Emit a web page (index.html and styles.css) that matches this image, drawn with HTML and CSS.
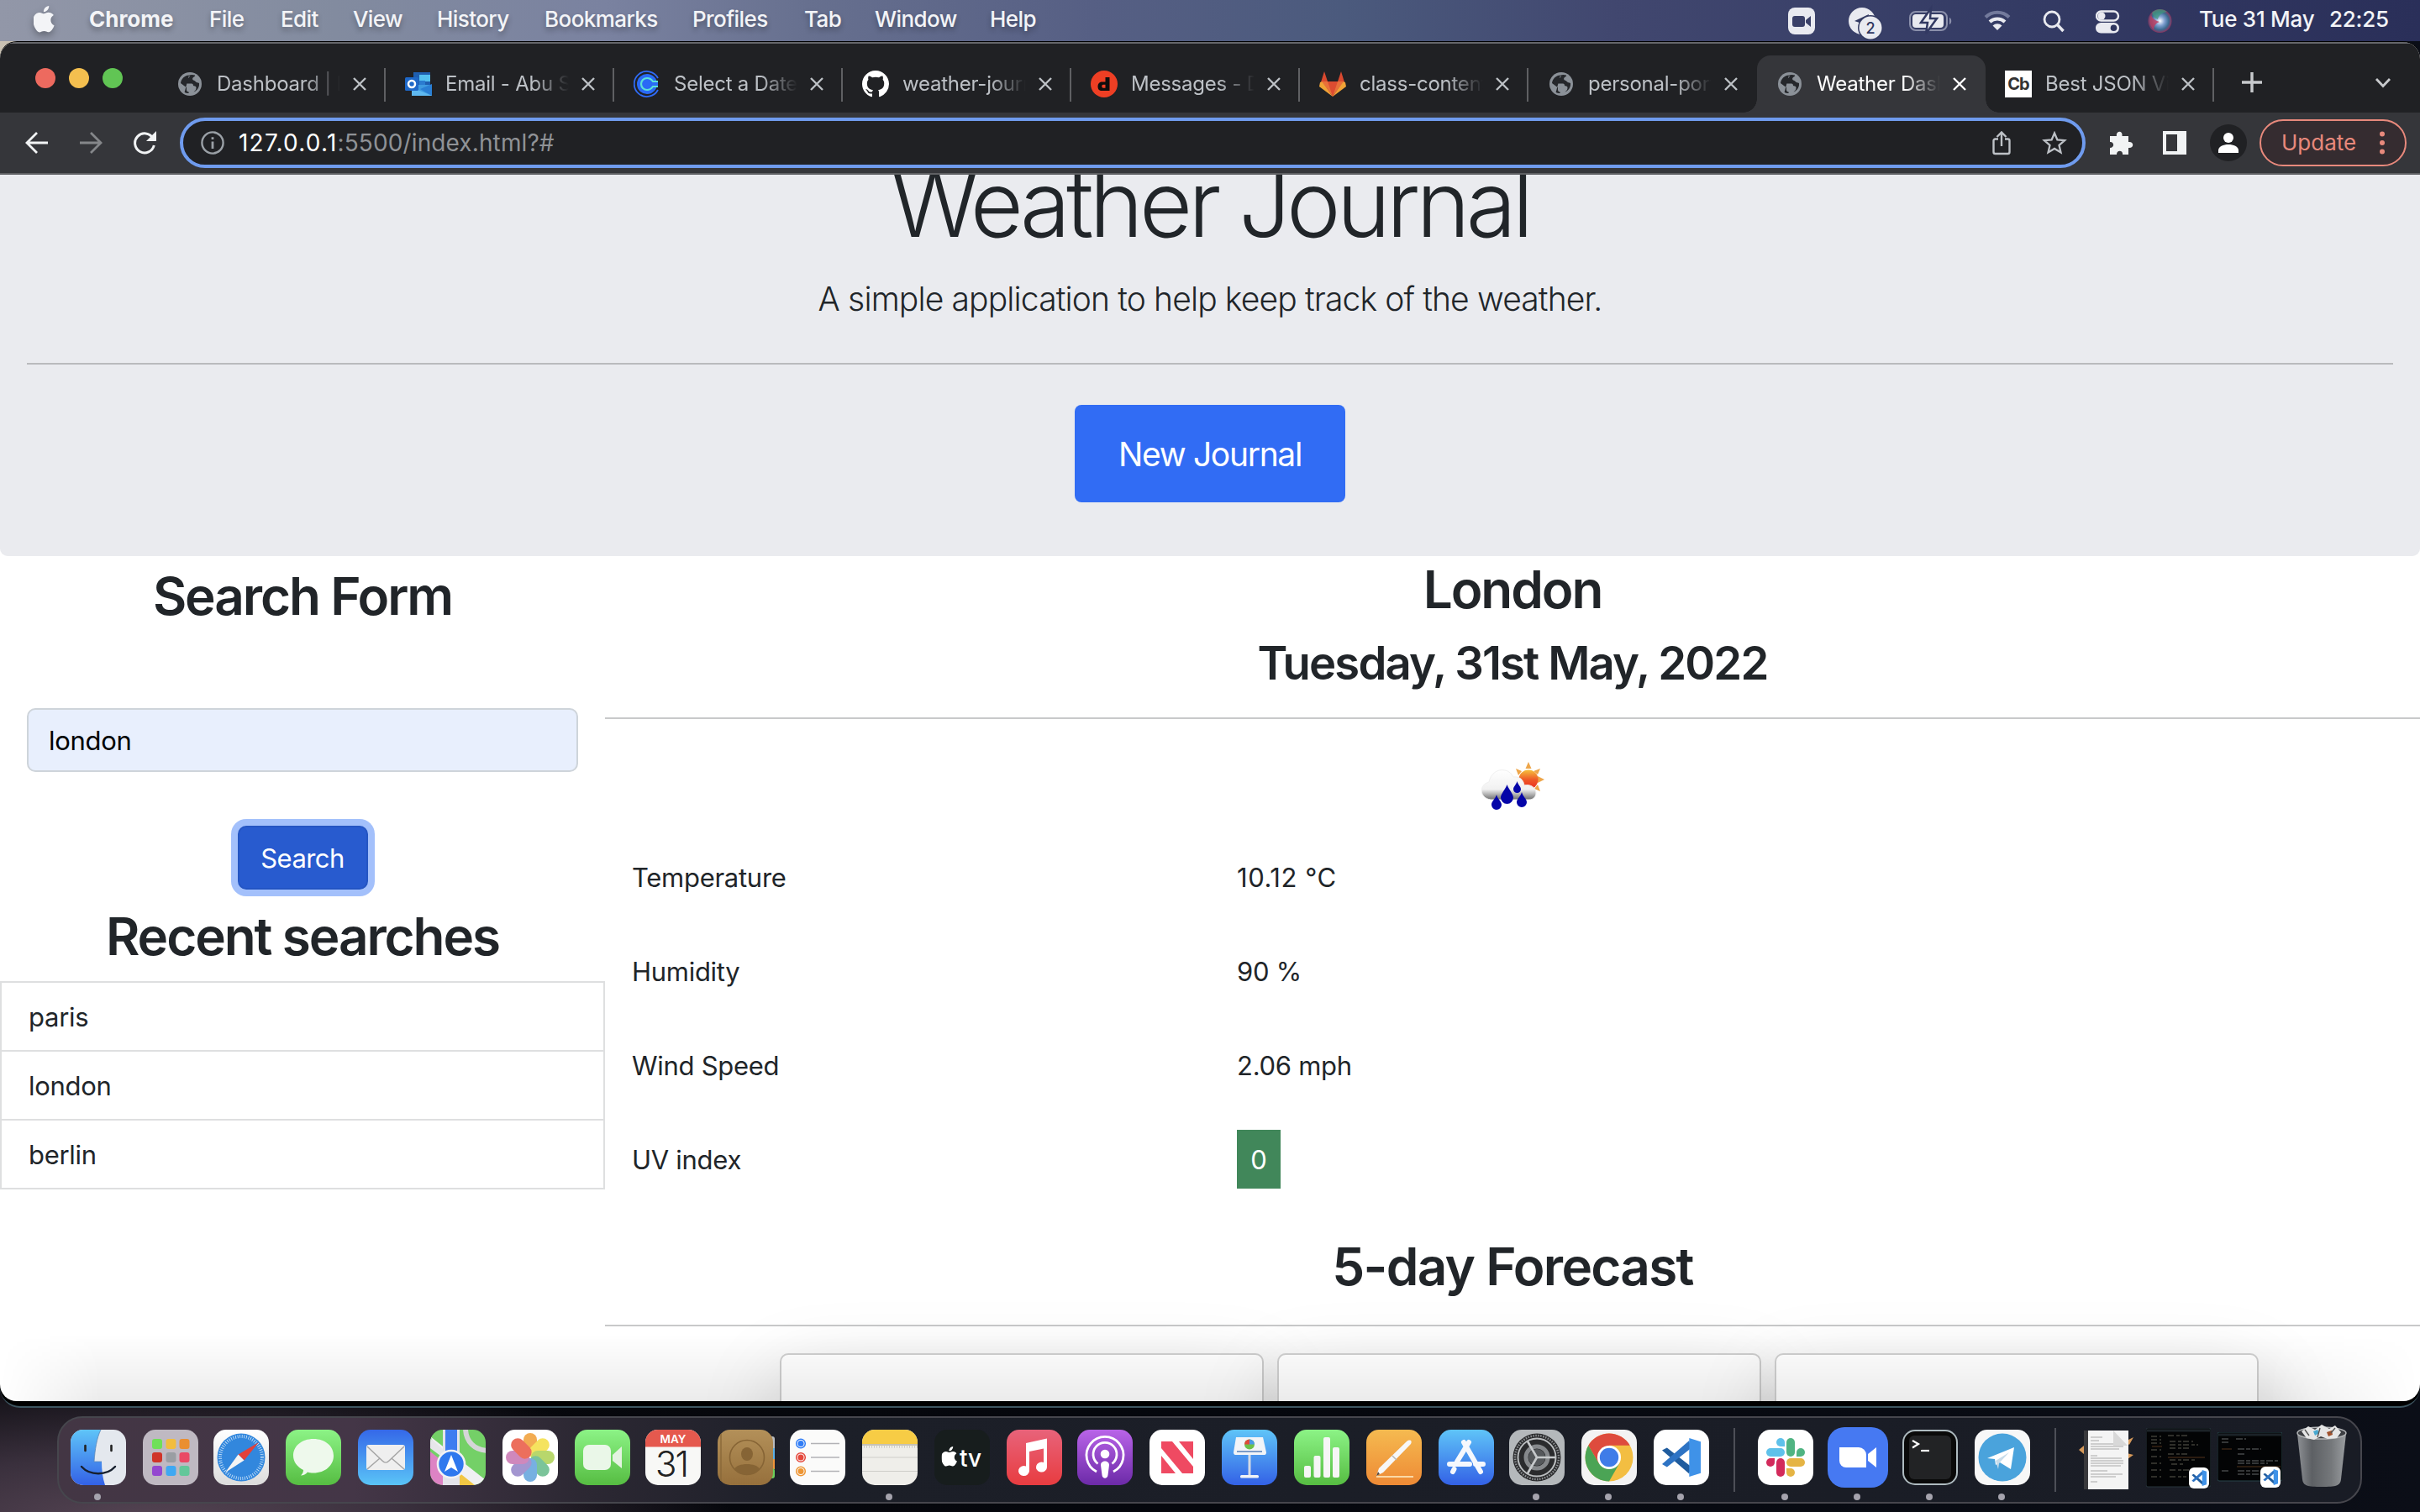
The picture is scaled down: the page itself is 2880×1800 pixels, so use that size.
FILE: index.html
```html
<!DOCTYPE html>
<html lang="en">
<head>
<meta charset="utf-8">
<title>Weather Dashboard</title>
<link rel="stylesheet" href="styles.css">
</head>
<body>
<svg class="defs" width="0" height="0" aria-hidden="true">
  <defs>
    <symbol id="close" viewBox="0 0 16 16"><path d="M1 1L15 15M15 1L1 15" stroke="currentColor" stroke-width="2.4" fill="none"/></symbol>
    <symbol id="globe" viewBox="0 0 28 28"><circle cx="14" cy="14" r="14" fill="#8b9198"/><path d="M13 3.5C8 3.8 3.6 7.600 3 13l7 5.200v2.600c0 1.500 1 2.600 2.600 2.800V25c-1.500.2-3.500-.2-5-1M13 3.500c1 1.500.6 2.700-.8 3.600-1.300.9-1 2-1 3.400H8v3h8c1.500 0 2 1 2 2.500 3 .3 4 1.400 3.400 3.600-.4 1.600-1.400 2.800-2.900 4 4.600-2 7-6 6.500-10.600-1.700-1-3.500-.5-4.400-2-.9-1.600-2.500-.8-3.300-2.300-.6-1.500.4-2.600 1.800-3.400 1.400-.7 1.300-1.300.7-1.800A12 12 0 0 0 13 3.500z" fill="#25272b"/></symbol>
    <symbol id="apple" viewBox="0 0 26 32"><path d="M18.200 0c.2 1.900-.6 3.700-1.700 5-1.100 1.300-2.900 2.300-4.600 2.200-.2-1.800.7-3.700 1.700-4.900C14.800 1 16.700.1 18.200 0zM23.900 11c-.2.100-3.600 2.100-3.500 6 0 4.700 4.200 6.300 4.200 6.300s-.6 2.100-2.100 4.200c-1.300 1.900-2.700 3.800-4.800 3.800-2.100.1-2.800-1.200-5.200-1.200-2.400 0-3.200 1.200-5.200 1.300-2.100.1-3.600-2-4.900-3.900C-.2 23.600-2 16.400.8 11.700 2.100 9.400 4.500 7.900 7.100 7.900c2 0 3.900 1.400 5.200 1.400 1.200 0 3.500-1.700 6-1.400 1 0 3.900.4 5.600 3.100z" fill="currentColor"/></symbol>
    <symbol id="vscode" viewBox="0 0 48 64" preserveAspectRatio="none"><path d="M1 20l6-4 29 31-2 12z" fill="#1f5c9e"/><path d="M1 43l6 5L36 17 34 4z" fill="#2d73c4"/><path d="M34 0l14 6v52l-14 6z" fill="#3f92e8"/></symbol>
    <linearGradient id="g-green" x2="0" y2="1"><stop stop-color="#8cf386"/><stop offset="1" stop-color="#56bd42"/></linearGradient>
    <linearGradient id="g-blue" x2="0" y2="1"><stop stop-color="#3568e8"/><stop offset="1" stop-color="#5ac4f7"/></linearGradient>
    <linearGradient id="g-sky" x2="0" y2="1"><stop stop-color="#5fc4f8"/><stop offset="1" stop-color="#3361e6"/></linearGradient>
    <linearGradient id="g-white" x2="0" y2="1"><stop stop-color="#fff"/><stop offset="1" stop-color="#dcdcdc"/></linearGradient>
    <linearGradient id="g-orange" x2="0" y2="1"><stop stop-color="#f5ba50"/><stop offset="1" stop-color="#ee8a35"/></linearGradient>
    <linearGradient id="g-purple" x2="0" y2="1"><stop stop-color="#b964e8"/><stop offset="1" stop-color="#6c2aa8"/></linearGradient>
    <linearGradient id="g-red" x2="0" y2="1"><stop stop-color="#e8637a"/><stop offset="1" stop-color="#e83c40"/></linearGradient>
    <linearGradient id="g-brown" x2="0" y2="1"><stop stop-color="#b39059"/><stop offset="1" stop-color="#96703c"/></linearGradient>
    <linearGradient id="g-trash" x2="1" y2="0"><stop stop-color="#8d9094"/><stop offset=".3" stop-color="#5d6064"/><stop offset=".7" stop-color="#75787b"/><stop offset="1" stop-color="#9a9da0"/></linearGradient>
    <linearGradient id="g-cloud" x2="0" y2="1"><stop stop-color="#fff"/><stop offset=".65" stop-color="#f1f1f1"/><stop offset="1" stop-color="#6e6e6e"/></linearGradient>
    <linearGradient id="g-sun" x2="0" y2="1"><stop stop-color="#f6c13c"/><stop offset=".5" stop-color="#ef5a28"/><stop offset="1" stop-color="#ea2c20"/></linearGradient>
    <radialGradient id="g-siri"><stop stop-color="#fff"/><stop offset=".4" stop-color="#7f9fd0"/><stop offset=".75" stop-color="#3b6a90"/><stop offset="1" stop-color="#8a3560"/></radialGradient>
  </defs>
</svg>

<div class="desktop">
  <header class="menubar">
    <svg class="menubar-apple" width="26" height="32"><use href="#apple"/></svg>
    <nav class="menus">
      <span class="menu menu-app">Chrome</span><span class="menu">File</span><span class="menu">Edit</span><span class="menu">View</span><span class="menu">History</span><span class="menu">Bookmarks</span><span class="menu">Profiles</span><span class="menu">Tab</span><span class="menu">Window</span><span class="menu">Help</span>
    </nav>
    <div class="status">
      <svg width="72" height="48" viewBox="0 0 72 48"><rect x="0" y="8" width="32" height="32" rx="8" fill="#e9eaf0"/><rect x="5" y="18" width="15" height="13" rx="3" fill="#3a4068"/><path d="M21 23l6-5v13l-6-5z" fill="#3a4068"/></svg>
      <svg width="72" height="48" viewBox="0 0 72 48"><circle cx="16" cy="24" r="16" fill="#e9eaf0"/><path d="M7 24l17-8-3 16-5-4-3 3v-5z" fill="#343b63"/><circle cx="26" cy="32" r="15" fill="#343b63"/><circle cx="26" cy="32" r="13.500" fill="#e9eaf0"/><text x="26" y="38.500" text-anchor="middle" class="badge-text">2</text></svg>
      <svg width="89" height="48" viewBox="0 0 89 48"><rect x="1" y="13" width="44" height="22" rx="7" fill="none" stroke="#8b90ab" stroke-width="2"/><path d="M48 20c3 1 3 7 0 8z" fill="#8b90ab"/><rect x="4" y="16" width="37" height="16" rx="4" fill="#e9eaf0"/><path d="M26 9L14 26h8l-2 13 13-18h-8z" fill="#e9eaf0" stroke="#323962" stroke-width="2.500"/></svg>
      <svg width="70" height="48" viewBox="0 0 70 48"><g fill="none" stroke-width="4"><path d="M2 19.500a20 20 0 0 1 28 0" stroke="#737a9c"/><path d="M7 25a13 13 0 0 1 18 0" stroke="#e9eaf0"/></g><path d="M10.500 29.500a8 8 0 0 1 11 0L16 35z" fill="#e9eaf0"/></svg>
      <svg width="63" height="48" viewBox="0 0 63 48"><circle cx="11" cy="22" r="9" fill="none" stroke="#e9eaf0" stroke-width="2.800"/><path d="M17.500 28.500l7 7.500" stroke="#e9eaf0" stroke-width="3.400"/></svg>
      <svg width="62" height="48" viewBox="0 0 62 48"><rect x="1" y="12.500" width="26" height="11" rx="5.500" fill="none" stroke="#e9eaf0" stroke-width="2.400"/><circle cx="7" cy="18" r="4.500" fill="#e9eaf0"/><rect x="0" y="26" width="28" height="12.500" rx="6.200" fill="#e9eaf0"/><circle cx="21.500" cy="32.200" r="3.800" fill="#2f365f"/></svg>
      <svg width="61" height="48" viewBox="0 0 61 48"><circle cx="14.500" cy="24" r="14" fill="url(#g-siri)"/><path d="M5 14c5-5 13-5 18-1-6 1-10 4-11 9-3-1-6-4-7-8z" fill="#3f9a7c" opacity=".7"/><path d="M4 17c-3 5-2 13 3 17 1-6 4-8 7-9-4-1-8-3-10-8z" fill="#c03a5c" opacity=".8"/></svg>
      <span class="clock-date">Tue 31 May</span><span class="clock-time">22:25</span>
    </div>
  </header>

  <div class="window-stack">
  <main class="window">
    <section class="tabstrip">
      <div class="lights"><i class="light light-red"></i><i class="light light-yellow"></i><i class="light light-green"></i></div>
      <div class="tab"><svg class="favicon" viewBox="-2 -2 32 32"><use href="#globe" width="28" height="28"/></svg><span class="tab-title">Dashboard | Ed</span><svg class="tab-close"><use href="#close"/></svg></div>
      <div class="tab"><svg class="favicon" viewBox="0 0 32 32"><rect x="10" y="2" width="20" height="18" fill="#1f5fb0"/><rect x="17" y="5" width="13" height="8" fill="#54c0f0"/><rect x="17" y="12" width="7" height="8" fill="#2b7cd0"/><path d="M8 17l24 0v13H8z" fill="#3f9be0"/><path d="M32 16v14L18 22z" fill="#2a7fd4"/><path d="M8 20l24 10H8z" fill="#5fb9f0"/><rect x="0" y="8" width="16" height="16" rx="1.500" fill="#1e68c8"/><circle cx="8" cy="16" r="4" fill="none" stroke="#fff" stroke-width="2.500"/></svg><span class="tab-title">Email - Abu Sa</span><svg class="tab-close"><use href="#close"/></svg></div>
      <div class="tab"><svg class="favicon" viewBox="0 0 32 32"><g fill="none"><path d="M29 9A15 15 0 1 0 29 23" stroke="#2f6bf5" stroke-width="1.800"/><circle cx="16" cy="16" r="12" fill="#2a6af5"/><path d="M29 13h-6c-2-3-4-4-7-4a7 7 0 0 0 0 14c3 0 5-1 7-4h6" fill="#2a6af5" stroke="#5ce0d8" stroke-width="2.200"/></g></svg><span class="tab-title">Select a Date &amp;</span><svg class="tab-close"><use href="#close"/></svg></div>
      <div class="tab"><svg class="favicon" viewBox="0 0 16 16"><path fill="#fff" d="M8 0C3.580 0 0 3.580 0 8c0 3.540 2.290 6.530 5.470 7.590.4.070.55-.17.550-.38 0-.19-.01-.82-.01-1.490-2.010.37-2.530-.49-2.690-.94-.09-.23-.48-.94-.82-1.130-.28-.15-.68-.52-.01-.53.63-.01 1.080.58 1.230.82.72 1.210 1.870.87 2.330.66.070-.52.28-.87.51-1.070-1.780-.2-3.640-.89-3.640-3.950 0-.87.310-1.590.82-2.150-.08-.2-.36-1.020.08-2.120 0 0 .67-.21 2.200.82.64-.18 1.320-.27 2-.27s1.360.09 2 .27c1.530-1.040 2.200-.82 2.200-.82.44 1.100.16 1.920.08 2.120.51.560.82 1.270.82 2.150 0 3.070-1.870 3.750-3.650 3.950.29.25.54.73.54 1.480 0 1.070-.01 1.930-.01 2.200 0 .21.150.46.55.38A8.010 8.010 0 0 0 16 8c0-4.420-3.580-8-8-8z"/></svg><span class="tab-title">weather-journal</span><svg class="tab-close"><use href="#close"/></svg></div>
      <div class="tab"><svg class="favicon" viewBox="0 0 32 32"><circle cx="16" cy="16" r="16" fill="#ee3f24"/><path d="M17.500 8h5v16H13.500c-3.500 0-5-2-5-5s1.500-5.500 5-5.500h4zM17.500 16.800h-2.600c-1 0-1.600.8-1.600 2s.6 2 1.600 2h2.600z" fill="#0d0d0d" fill-rule="evenodd"/></svg><span class="tab-title">Messages - Dev</span><svg class="tab-close"><use href="#close"/></svg></div>
      <div class="tab"><svg class="favicon" viewBox="0 0 32 32"><path d="M6 1L1 17h30L26 1l-4 12H10z" fill="#d9492f"/><path d="M1 14l-1 5 16 12 16-12-1-5-3-1-12 18L4 13z" fill="#f0a336"/><path d="M3 13h26L16 31z" fill="#e8703a"/><path d="M10 13h12l-6 18z" fill="#dc4c31"/></svg><span class="tab-title">class-content/</span><svg class="tab-close"><use href="#close"/></svg></div>
      <div class="tab tab-before-active"><svg class="favicon" viewBox="-2 -2 32 32"><use href="#globe" width="28" height="28"/></svg><span class="tab-title">personal-portfo</span><svg class="tab-close"><use href="#close"/></svg></div>
      <div class="tab tab-active"><svg class="favicon" viewBox="-2 -2 32 32"><use href="#globe" width="28" height="28"/></svg><span class="tab-title">Weather Dash</span><svg class="tab-close"><use href="#close"/></svg></div>
      <div class="tab"><span class="favicon favicon-cb">Cb</span><span class="tab-title">Best JSON View</span><svg class="tab-close"><use href="#close"/></svg></div>
      <svg class="tab-new" width="24" height="24" viewBox="0 0 24 24"><path d="M12 0v24M0 12h24" stroke="#c8cacd" stroke-width="3.400"/></svg>
      <svg class="tab-menu" width="20" height="14" viewBox="0 0 20 14"><path d="M2 2l8 8.500L18 2" stroke="#c8cacd" stroke-width="2.800" fill="none"/></svg>
    </section>

    <section class="toolbar">
      <svg class="nav-icon" viewBox="0 0 28 28"><path d="M27 14H3M14 2L2 14l12 12" stroke="#f1f3f4" stroke-width="2.800" fill="none"/></svg>
      <svg class="nav-icon nav-forward" viewBox="0 0 28 28"><path d="M1 14h24M14 2l12 12-12 12" stroke="#85878a" stroke-width="2.800" fill="none"/></svg>
      <svg class="nav-icon nav-reload" viewBox="0 0 28 28"><path d="M24 8.500A11.500 11.500 0 1 0 25.300 17" stroke="#f1f3f4" stroke-width="3" fill="none"/><path d="M28 0v12H16z" fill="#f1f3f4"/></svg>
      <div class="omnibox">
        <svg width="28" height="28" viewBox="0 0 28 28"><circle cx="14" cy="14" r="12.600" fill="none" stroke="#9aa0a6" stroke-width="2.400"/><path d="M14 12.500V21M14 7.200v2.800" stroke="#9aa0a6" stroke-width="2.800"/></svg>
        <span class="url"><b>127.0.0.1</b>:5500/index.html?#</span>
        <svg class="omni-share" width="22" height="30" viewBox="0 0 22 30"><path d="M7 10.500H3.500A2 2 0 0 0 1.500 12.500V26a2 2 0 0 0 2 2h15a2 2 0 0 0 2-2V12.500a2 2 0 0 0-2-2H15M11 19V3M5.500 8L11 2.500 16.500 8" stroke="#bdc1c6" stroke-width="2.400" fill="none"/></svg>
        <svg width="30" height="28" viewBox="0 0 30 28"><path d="M15 2.500l3.400 8 8.700.7-6.600 5.700 2 8.500L15 20.900l-7.500 4.500 2-8.500L2.900 11.200l8.700-.7z" stroke="#bdc1c6" stroke-width="2.300" fill="none"/></svg>
      </div>
      <svg class="ext" width="30" height="28" viewBox="0 0 30 28"><path d="M1 6h8c-1.500-6 7.500-8 6.500 0H23v7c7-1 7 8 0 7v8h-7c1-5-7-6-7 0H1v-8c6 0 5-7.500 0-7z" fill="#f1f3f4"/></svg>
      <svg class="panel" width="28" height="28" viewBox="0 0 28 28"><path d="M0 0h28v28H0zM4 4v20h13V4z" fill="#f1f3f4" fill-rule="evenodd"/></svg>
      <svg class="avatar" width="44" height="44" viewBox="0 0 44 44"><circle cx="22" cy="22" r="22" fill="#202124"/><circle cx="22" cy="16" r="6" fill="#fff"/><path d="M10 34v-3c0-4.500 6-7 12-7s12 2.500 12 7v3z" fill="#fff"/></svg>
      <div class="update"><span>Update</span><svg width="6" height="28" viewBox="0 0 6 28"><g fill="#e8897c"><circle cx="3" cy="3.500" r="3"/><circle cx="3" cy="14" r="3"/><circle cx="3" cy="24.500" r="3"/></g></svg></div>
    </section>

    <div class="page">
      <section class="jumbotron">
        <h1>Weather Journal</h1>
        <p class="lead">A simple application to help keep track of the weather.</p>
        <hr>
        <button class="btn btn-new">New Journal</button>
      </section>
      <div class="columns">
        <aside class="sidebar">
          <h2 class="search-title">Search Form</h2>
          <div class="field">london</div>
          <button class="btn btn-search">Search</button>
          <h2 class="recent-title">Recent searches</h2>
          <ul class="recent"><li>paris</li><li>london</li><li>berlin</li></ul>
        </aside>
        <section class="weather">
          <h2 class="city">London</h2>
          <h3>Tuesday, 31st May, 2022</h3>
          <hr>
          <svg class="condition" width="100" height="100" viewBox="0 0 100 100"><g fill="#eea64a"><path d="M69 19l3.500 8h-7zM83 27l-3 7-5-4zM88 40l-8 4v-8zM83 54l-7-3 4-5zM54 27l7 3-4 5z"/></g><circle cx="69" cy="40" r="11.500" fill="url(#g-sun)"/><path d="M24 64c-14-2-14-18-2-21 2-10 10-16 19-14 5 1 8 4 10 8 7-1 12 3 13 10 6-2 14 2 14 9 0 5-4 8-8 8z" fill="url(#g-cloud)" stroke="#f0f0f0"/><g fill="#0505a8"><path d="M43.500 46c2 6 7.500 11 7.500 15.500a7.500 7.500 0 0 1-15 0C36 57 41.500 52 43.500 46z"/><path d="M55.500 42c1 4 4.500 6.500 4.500 9.500a4.500 4.500 0 0 1-9 0c0-3 3.500-5.500 4.500-9.500z"/><path d="M61 55c1.200 5 6 8 6 12a6 6 0 0 1-12 0c0-4 4.800-7 6-12z"/><path d="M31 58c1.200 5 6 8 6 12a6 6 0 0 1-12 0c0-4 4.800-7 6-12z"/></g></svg>
          <dl class="readings">
            <dt>Temperature</dt><dd class="temp">10.12 °C</dd>
            <dt>Humidity</dt><dd>90 %</dd>
            <dt>Wind Speed</dt><dd>2.06 mph</dd>
            <dt>UV index</dt><dd><span class="uv">0</span></dd>
          </dl>
          <h2 class="forecast-title">5-day Forecast</h2>
          <hr>
          <div class="cards"><div class="card"></div><div class="card"></div><div class="card"></div></div>
        </section>
      </div>
      <div class="page-shade"></div>
    </div>
  </main>
  </div>

  <footer class="dock">
    <div class="app running"><svg class="icon finder" viewBox="0 0 66 66"><rect width="66" height="66" rx="15" fill="#e4e8ee"/><path d="M15 0h21c-5 10-7 24-8 38h9c0 10 1 19 4 28H15A15 15 0 0 1 0 51V15A15 15 0 0 1 15 0z" fill="url(#g-sky)"/><path d="M36 0c-5 10-7 24-8 38h9" fill="none" stroke="#5a88b8" stroke-width=".8"/><path d="M17.500 19v6M48.500 19v6" stroke="#222" stroke-width="2.600" stroke-linecap="round"/><path d="M13 44c10 11 30 11 40 0" fill="none" stroke="#17202e" stroke-width="2.400" stroke-linecap="round"/></svg></div>
    <div class="app"><svg class="icon" viewBox="0 0 66 66"><rect width="66" height="66" rx="15" fill="#bfb9c2"/><g><rect x="11" y="11" width="12" height="12" rx="3" fill="#6fe058"/><rect x="27.500" y="11" width="12" height="12" rx="3" fill="#f2bd3e"/><rect x="43.500" y="11" width="12" height="12" rx="3" fill="#ea8f30"/><rect x="11" y="27" width="12" height="12" rx="3" fill="#d03428"/><rect x="27.500" y="27" width="12" height="12" rx="3" fill="#9a9ea3"/><rect x="43.500" y="27" width="12" height="12" rx="3" fill="#ea4a64"/><rect x="11" y="43" width="12" height="12" rx="3" fill="#9448d0"/><rect x="27.500" y="43" width="12" height="12" rx="3" fill="#3fa8f2"/><rect x="43.500" y="43" width="12" height="12" rx="3" fill="#63c79a"/></g></svg></div>
    <div class="app nudge"><svg class="icon" viewBox="0 0 66 66"><rect width="66" height="66" rx="15" fill="url(#g-white)"/><circle cx="33" cy="33" r="28.500" fill="#3287dd"/><circle cx="33" cy="33" r="25" fill="none" stroke="#cfe6fa" stroke-width="4" stroke-dasharray=".8 1.820"/><path d="M54 15L36.500 36.500 29.500 29.500z" fill="#e2413a"/><path d="M14 51l15.500-21.500 7 7z" fill="#f4f4f4"/></svg></div>
    <div class="app"><svg class="icon" viewBox="0 0 66 66"><rect width="66" height="66" rx="15" fill="url(#g-green)"/><path d="M33 11c14 0 24 8.500 24 20S47 51.500 33 51.500c-3 0-5-.3-7-1-2 2.500-5 4-8 4 2-2 3-4 3-6.500C13.500 44 9 38 9 31c0-11.500 10-20 24-20z" fill="#eef9ec"/></svg></div>
    <div class="app"><svg class="icon" viewBox="0 0 66 66"><rect width="66" height="66" rx="15" fill="url(#g-blue)"/><rect x="10" y="18" width="46" height="30" rx="3" fill="#efefef"/><path d="M11 20l18 17c3 3 5 3 8 0l18-17M11 47l15-13M55 47L40 34" stroke="#a5a5a5" stroke-width="1.500" fill="none"/></svg></div>
    <div class="app"><svg class="icon" viewBox="0 0 66 66"><clipPath id="maps-clip"><rect width="66" height="66" rx="15"/></clipPath><g clip-path="url(#maps-clip)"><rect width="66" height="66" fill="#74d067"/><path d="M0 26l20 16v24H0z" fill="#dd83c4"/><path d="M0 8l66 52v6H32z" fill="#f0f0f2"/><path d="M0 10l16 14v10L0 22z" fill="#e6e6ea"/><path d="M33 66V50l20 16z" fill="#f2c744"/><rect x="15" y="0" width="20" height="66" fill="#e4e4ea"/><rect x="18" y="0" width="14" height="34" fill="#3d7cf0"/><path d="M42 0c1 14 10 24 26 25" fill="none" stroke="#d5d5d8" stroke-width="6"/></g><circle cx="25" cy="41" r="16" fill="#2f78ee" stroke="#f1f1f4" stroke-width="2.600"/><path d="M25 30l8 20-8-5-8 5z" fill="#fff"/></svg></div>
    <div class="app"><svg class="icon" viewBox="0 0 66 66"><rect width="66" height="66" rx="15" fill="#fff"/><g opacity=".82"><rect x="25" y="4" width="16" height="28" rx="8" fill="#f09a2e"/><rect x="25" y="4" width="16" height="28" rx="8" fill="#f3dd3c" transform="rotate(45 33 33)"/><rect x="25" y="4" width="16" height="28" rx="8" fill="#a9cf4c" transform="rotate(90 33 33)"/><rect x="25" y="4" width="16" height="28" rx="8" fill="#5fb884" transform="rotate(135 33 33)"/><rect x="25" y="4" width="16" height="28" rx="8" fill="#5a9fdb" transform="rotate(180 33 33)"/><rect x="25" y="4" width="16" height="28" rx="8" fill="#8f7fc6" transform="rotate(225 33 33)"/><rect x="25" y="4" width="16" height="28" rx="8" fill="#c56fae" transform="rotate(270 33 33)"/><rect x="25" y="4" width="16" height="28" rx="8" fill="#e8503a" transform="rotate(315 33 33)"/></g></svg></div>
    <div class="app"><svg class="icon" viewBox="0 0 66 66"><rect width="66" height="66" rx="15" fill="url(#g-green)"/><rect x="10" y="18" width="33" height="30" rx="7" fill="#eaf7e8"/><path d="M45 30l11-10v26L45 37z" fill="#e4f3e1"/></svg></div>
    <div class="app nudge"><svg class="icon" viewBox="0 0 66 66"><clipPath id="cal-clip"><rect width="66" height="66" rx="15"/></clipPath><g clip-path="url(#cal-clip)"><rect width="66" height="66" fill="#f8f8f6"/><rect width="66" height="20.500" fill="#e5594e"/></g><text x="33" y="16" text-anchor="middle" class="cal-month">MAY</text><text x="31" y="56" text-anchor="middle" class="cal-day">31</text></svg></div>
    <div class="app"><svg class="icon" viewBox="0 0 66 66"><rect x="58" y="8" width="10" height="18" rx="3" fill="#b9bcc0"/><rect x="58" y="22" width="10" height="14" fill="#5ab0e8"/><rect x="58" y="35" width="10" height="12" fill="#f0953a"/><rect x="58" y="46" width="10" height="12" rx="3" fill="#6cd05a"/><rect width="66" height="66" rx="15" fill="url(#g-brown)"/><path d="M4 5v56" stroke="#8b6a3a" stroke-width="1.500"/><circle cx="35" cy="33" r="20.500" fill="none" stroke="#866435" stroke-width="1.600"/><ellipse cx="35" cy="29" rx="7" ry="8" fill="#866435"/><path d="M20 47c3-8 27-8 30 0-7 9-23 9-30 0z" fill="#866435"/></svg></div>
    <div class="app"><svg class="icon" viewBox="0 0 66 66"><rect width="66" height="66" rx="15" fill="#fbfbfa"/><g stroke="#b2b2b6" stroke-width="1.500"><path d="M25 16.500h34M25 33h34M25 49.500h34"/></g><g stroke-width="1.500" fill="none"><circle cx="13" cy="16.500" r="5.300" stroke="#2f7cf6"/><circle cx="13" cy="33" r="5.300" stroke="#e5483c"/><circle cx="13" cy="49.500" r="5.300" stroke="#ee9634"/></g><circle cx="13" cy="16.500" r="3.500" fill="#2f7cf6"/><circle cx="13" cy="33" r="3.500" fill="#e5483c"/><circle cx="13" cy="49.500" r="3.500" fill="#ee9634"/></svg></div>
    <div class="app running"><svg class="icon" viewBox="0 0 66 66"><clipPath id="note-clip"><rect width="66" height="66" rx="15"/></clipPath><g clip-path="url(#note-clip)"><rect width="66" height="66" fill="#efeeea"/><rect width="66" height="17" fill="#f7cc45"/><path d="M0 18h66" stroke="#b9b3a4" stroke-width="1.500"/><path d="M2 20.500h64" stroke="#c4c2bd" stroke-width="2" stroke-dasharray="1 2"/><path d="M0 33h66M0 49.500h66" stroke="#cfceca" stroke-width="1.200"/></g></svg></div>
    <div class="app"><svg class="icon" viewBox="0 0 66 66"><rect width="66" height="66" rx="15" fill="#171d1d"/><svg x="8.500" y="20" width="19.500" height="24" class="tv-apple"><use href="#apple"/></svg><text x="30" y="43.500" class="tv-text" textLength="26">tv</text></svg></div>
    <div class="app"><svg class="icon" viewBox="0 0 66 66"><rect width="66" height="66" rx="15" fill="url(#g-red)"/><path d="M23 16l25-5.500v34a6.500 6 0 1 1-4-5.500V22.500L27 26v23a6.500 6 0 1 1-4-5.500z" fill="#fff"/></svg></div>
    <div class="app nudge"><svg class="icon" viewBox="0 0 66 66"><rect width="66" height="66" rx="15" fill="url(#g-purple)"/><g fill="none" stroke="#fff" stroke-width="2.800"><path d="M23 50a22 22 0 1 1 20 0"/><path d="M24.500 40.500a14 14 0 1 1 17 0"/></g><circle cx="33" cy="29" r="5.300" fill="#fff"/><path d="M28 42c0-6 10-6 10 0l-1.500 12c-.5 5-6.500 5-7 0z" fill="#fff"/></svg></div>
    <div class="app"><svg class="icon" viewBox="0 0 66 66"><rect width="66" height="66" rx="15" fill="#fff"/><path d="M14 14h13l25 30v8H39L14 22z" fill="#ef4a62"/><path d="M35 14h17v21zM14 31l17 21H14z" fill="#ef4a62"/></svg></div>
    <div class="app"><svg class="icon" viewBox="0 0 66 66"><rect width="66" height="66" rx="15" fill="url(#g-sky)"/><path d="M17 9h32l4 18c0 2-1 3-2 3H16c-1 0-2-1-2-3z" fill="#f2f4f8"/><path d="M18 26h30" stroke="#7d9cc8" stroke-width="2"/><circle cx="33" cy="17.500" r="6" fill="#6cc04a"/><path d="M33 17.500v-6a6 6 0 0 0-6 6z" fill="#e04a3a"/><path d="M33 17.500v-6a6 6 0 0 1 6 6z" fill="#4a9ae8"/><path d="M33 30v25" stroke="#d5dae4" stroke-width="3"/><rect x="22" y="54" width="22" height="3.500" rx="1.500" fill="#f0f2f6"/></svg></div>
    <div class="app"><svg class="icon" viewBox="0 0 66 66"><rect width="66" height="66" rx="15" fill="url(#g-green)"/><g fill="#f6f6f6"><rect x="12" y="43" width="8" height="14" rx="2"/><rect x="23.500" y="31" width="8" height="26" rx="2"/><rect x="35" y="9" width="8" height="48" rx="2"/><rect x="46" y="21" width="8" height="36" rx="2"/></g></svg></div>
    <div class="app"><svg class="icon" viewBox="0 0 66 66"><rect width="66" height="66" rx="15" fill="url(#g-orange)"/><path d="M12 56h44" stroke="#fbd9a6" stroke-width="2.200"/><path d="M12 55l3-9 33-32c4-3 7-1 5 3L20 51z" fill="#f7f7f7"/><path d="M12 55l2-5 2 3z" fill="#5a4a3a"/><path d="M31 31l5 5" stroke="#b5b5b5" stroke-width="1.500"/></svg></div>
    <div class="app"><svg class="icon" viewBox="0 0 66 66"><rect width="66" height="66" rx="15" fill="url(#g-sky)"/><g stroke="#f5f8fd" stroke-width="6" stroke-linecap="round"><path d="M36 15L22 38M30 15l20 35M18.500 47l-1.500 3M13 41h24M44 41h9"/></g></svg></div>
    <div class="app running nudge"><svg class="icon" viewBox="0 0 66 66"><rect width="66" height="66" rx="15" fill="#b4b8bb"/><circle cx="33" cy="33" r="28.500" fill="#2a2b2d"/><circle cx="33" cy="33" r="26" fill="none" stroke="#8d9093" stroke-width="2.500" stroke-dasharray="1.500 1.500"/><circle cx="33" cy="33" r="22.500" fill="none" stroke="#b9bcbe" stroke-width="2"/><circle cx="33" cy="33" r="13" fill="none" stroke="#85888b" stroke-width="5"/><circle cx="33" cy="33" r="10" fill="#55585b"/><path d="M33 33h22M33 33L22 14M33 33L22 52" stroke="#c6c9cb" stroke-width="2.600"/></svg></div>
    <div class="app running"><svg class="icon" viewBox="0 0 66 66"><rect width="66" height="66" rx="15" fill="#f3f3f3"/><circle cx="33" cy="33" r="28.500" fill="#f3be42"/><path d="M8.300 18.800A28.500 28.500 0 0 1 57.700 18.800H33L20.700 40z" fill="#de4b3d"/><path d="M8.300 18.800A28.500 28.500 0 0 0 33 61.500L45.300 40H20.700z" fill="#4ba455"/><circle cx="33" cy="33" r="14" fill="#fff"/><circle cx="33" cy="33" r="11.200" fill="#3f7ce8"/></svg></div>
    <div class="app running"><svg class="icon" viewBox="0 0 66 66"><rect width="66" height="66" rx="15" fill="#fff"/><use href="#vscode" x="9" y="10" width="47" height="46"/></svg></div>
    <i class="divider"></i>
    <div class="app running"><svg class="icon" viewBox="0 0 66 66"><rect width="66" height="66" rx="15" fill="#fff"/><g fill="#5fc1ea"><rect x="10" y="22" width="22" height="10" rx="5"/><path d="M32 20h-5a5 5 0 1 1 5-5z"/></g><g fill="#50b482"><rect x="34" y="10" width="10" height="22" rx="5"/><path d="M46 32v-5a5 5 0 1 1 5 5z"/></g><g fill="#e5b444"><rect x="34" y="34" width="22" height="10" rx="5"/><path d="M34 46h5a5 5 0 1 1-5 5z"/></g><g fill="#d32a5b"><rect x="22" y="34" width="10" height="22" rx="5"/><path d="M20 34v5a5 5 0 1 1-5-5z"/></g></svg></div>
    <div class="app running"><svg class="icon icon-zoom" viewBox="0 0 72 72"><rect width="72" height="72" rx="20" fill="#4679f2"/><path d="M14 24h23a9 9 0 0 1 9 9v15H22a8 8 0 0 1-8-8z" fill="#fff"/><path d="M48 32l10-8v24l-10-8z" fill="#fff"/></svg></div>
    <div class="app running"><svg class="icon" viewBox="0 0 66 66"><rect width="66" height="66" rx="15" fill="#aebbc0"/><rect x="2" y="2" width="62" height="62" rx="13" fill="#0a0a0a"/><rect x="8" y="7" width="50" height="52" rx="6" fill="#222325"/><path d="M12 13l7 4-7 4.500" stroke="#fff" stroke-width="2.200" fill="none"/><path d="M22 25h10" stroke="#fff" stroke-width="2.200"/></svg></div>
    <div class="app running"><svg class="icon" viewBox="0 0 66 66"><rect width="66" height="66" rx="15" fill="#f7f7f7"/><circle cx="33" cy="33" r="28.500" fill="#4aa3dc"/><path d="M15 34l32-13-4 26-13-8-5 3-1-7z" fill="#fff"/><path d="M25 37l16-10-12 13-1 7z" fill="#c8dcea"/></svg></div>
    <i class="divider"></i>
    <svg class="doc" width="66" height="72" viewBox="0 0 66 72"><path d="M0 24l6-5v10zM55 14l10-5-5 9zM57 28l8 2-7 5z" fill="#d79a5a"/><rect x="6" y="1" width="7" height="70" fill="#39393c"/><rect x="11" y="1" width="48" height="70" fill="#f4f4f4"/><g stroke="#a8a8a8" stroke-width="1"><path d="M14 9h14M14 13h10M14 17h39M14 20h39M14 23h34M14 31h8M14 34h37M14 37h39M14 40h39M14 43h36M14 49h20M14 53h38M14 56h30M14 62h8"/></g><path d="M41 1l17 18H41z" fill="#d8d8d8"/></svg>
    <svg class="mini mini-a" width="77" height="72" viewBox="0 0 77 72"><rect width="77" height="70" rx="2" fill="#030405" stroke="#29353d"/><path d="M1 3h75" stroke="#1c2328" stroke-width="3"/><g stroke="#5d5a50" stroke-width="1" stroke-dasharray="7 3 4 2"><path d="M6 10h12M6 14h12M6 18h12M6 26h12M6 34h12M6 42h12M6 50h12M6 58h12M26 9h24M28 16h28M28 20h34M28 24h26M26 31h24M28 38h30M30 43h16M28 50h24M28 58h20"/></g><path d="M7 22h12M26 35h44" stroke="#53331c"/><rect x="51" y="47" width="24" height="25" rx="6" fill="#fff"/><use href="#vscode" x="54" y="50" width="18" height="19"/></svg>
    <svg class="mini mini-b" width="77" height="66" viewBox="0 0 77 66"><rect width="77" height="58" rx="2" fill="#030405" stroke="#29424a"/><path d="M1 3h75" stroke="#1c2328" stroke-width="3"/><g stroke="#66686a" stroke-width="1" stroke-dasharray="8 2 5 2"><path d="M5 8h10M5 12h10M5 46h10M22 8h12M24 20h28M24 26h8M24 34h48M24 37h36M24 46h44M24 50h40"/></g><path d="M5 20h12M23 41h52" stroke="#53331c"/><rect x="51" y="41" width="24" height="25" rx="6" fill="#fff"/><use href="#vscode" x="54" y="44" width="18" height="19"/></svg>
    <svg class="trash" width="60" height="76" viewBox="0 0 60 76"><path d="M1 12h58l-6 54c-1 8-6 9-23 9S8 74 7 66z" fill="url(#g-trash)"/><ellipse cx="30" cy="11" rx="29" ry="7" fill="#3c3e42" stroke="#b4b6b8" stroke-width="1.500"/><path d="M6 9l8-6 8 4 8-6 9 5 7-4 7 8-5 7-11 1-8-3-8 4-9-2z" fill="#e6e6e6"/><path d="M20 9l5-2 2 4-5 3z" fill="#48a8d0"/><path d="M36 10l6-2 1 5-5 2z" fill="#a0522e"/><path d="M10 7l5 7M28 5l-3 11M46 5l-5 6" stroke="#555" stroke-width="1.400"/></svg>
  </footer>
</div>
</body>
</html>
```
FILE: styles.css
```css
* { box-sizing: border-box; }

body {
  margin: 0;
  font-family: Inter, "Liberation Sans", sans-serif;
  color: #212529;
  font-size: 31px;
  line-height: 48px;
}

.defs { position: absolute; }

.desktop {
  display: flex;
  flex-direction: column;
  width: 2880px;
  height: 1800px;
  overflow: hidden;
  background:
    radial-gradient(circle at 0 60px, #c9c1b3 0 30px, transparent 31px),
    radial-gradient(ellipse 700px 190px at 6% 101%, #574655 0%, #3a303d 45%, transparent 100%),
    linear-gradient(90deg, #08080c, #05070d 50%, #0b0e17);
}

/* macOS menu bar */
.menubar {
  flex: none;
  display: flex;
  align-items: center;
  height: 49px;
  padding-left: 40px;
  color: #f3f4f7;
  font-size: 26px;
  line-height: 46px;
  background: linear-gradient(90deg, #9297a8 0, #828b9f 400px, #7a82a0 720px, #67708f 960px, #565f84 1300px, #4b5a7d 1600px, #41476f 1920px, #343b64 2400px, #2a2f59 100%);
}
.menubar-apple { margin-top: -4px; filter: drop-shadow(0 4px 4px rgba(0, 0, 0, .3)); }
.menus {
  display: grid;
  grid-template-columns: 143px 85px 86px 100px 128px 176px 133px 84px 137px 80px;
  margin: -3px 0 0 40px;
  font-weight: 500;
  letter-spacing: -0.022em;
  text-shadow: 0 4px 6px rgba(0, 0, 0, .3);
}
.menu-app { font-weight: 700; letter-spacing: 0; }
.status { display: flex; align-items: center; margin-left: auto; padding-right: 35px; white-space: nowrap; }
.clock-date, .clock-time { margin-top: -3px; font-weight: 500; letter-spacing: -0.01em; }
.clock-date { width: 155px; }
.clock-time { width: 73px; }
.badge-text { font-size: 18px; font-weight: 500; fill: #2f365f; }

/* Browser window */
.window-stack {
  flex: none;
  height: 1627px;
  padding: 1px 0 6px;
  background: #000;
  border-bottom: 2px solid #3d5560;
  border-radius: 20px 20px 24px 24px;
}
.window {
  display: flex;
  flex-direction: column;
  height: 1618px;
  border-radius: 20px;
  overflow: hidden;
  background: #fff;
}
.tabstrip {
  flex: none;
  display: flex;
  align-items: center;
  height: 84px;
  background: #202124;
  border-top: 2px solid #65666a;
  font-size: 24px;
  line-height: 30px;
}
.lights { display: flex; gap: 16px; width: 187px; padding-left: 42px; }
.light { width: 24px; height: 24px; border-radius: 50%; }
.light-red { background: #ed6a5f; }
.light-yellow { background: #f4bf4f; }
.light-green { background: #61c554; }
.tab {
  position: relative;
  display: flex;
  align-items: center;
  width: 272px;
  height: 68px;
  margin-top: 14px;
  padding-left: 23px;
  color: #bdc1c6;
}
.tab::after { content: ""; position: absolute; right: 0; top: 15px; width: 2px; height: 40px; background: #5f6063; }
.tab-before-active::after, .tab-active::after { display: none; }
.favicon { flex: none; width: 32px; height: 32px; }
.favicon-cb { background: #fff; color: #333; font-weight: 700; font-size: 20px; text-align: center; line-height: 32px; letter-spacing: -1px; }
.tab-title {
  width: 147px;
  margin-left: 16px;
  overflow: hidden;
  white-space: nowrap;
  letter-spacing: -0.01em;
  -webkit-mask-image: linear-gradient(90deg, #000 104px, transparent 147px);
  mask-image: linear-gradient(90deg, #000 104px, transparent 147px);
}
.tab-close { width: 16px; height: 16px; margin-left: 15px; }
.tab-active { background: #35363a; border-radius: 16px 16px 0 0; color: #fff; }
.tab-active::before {
  content: "";
  position: absolute;
  left: -16px;
  bottom: 0;
  width: 304px;
  height: 16px;
  background:
    radial-gradient(circle at 0 0, transparent 15.5px, #35363a 16px) left / 16px 16px no-repeat,
    radial-gradient(circle at 100% 0, transparent 15.5px, #35363a 16px) right / 16px 16px no-repeat;
}
.tab-new { margin: 10px 0 0 33px; }
.tab-menu { margin: 12px 0 0 134px; }

.toolbar {
  flex: none;
  display: flex;
  align-items: center;
  height: 74px;
  padding: 0 16px 0 30px;
  background: #35363a;
  border-bottom: 2px solid #5f6063;
}
.nav-icon { flex: none; width: 28px; height: 28px; }
.nav-forward { margin-left: 36px; }
.nav-reload { margin-left: 36px; }
.omnibox {
  display: flex;
  align-items: center;
  width: 2268px;
  height: 60px;
  margin-left: 28px;
  padding: 0 18px 0 21px;
  border: 4px solid #6f9bee;
  border-radius: 30px;
  background: #202124;
  font-size: 28px;
}
.url { margin-left: 17px; letter-spacing: 0.004em; color: #8f9296; }
.url b { font-weight: 400; letter-spacing: 0.044em; color: #fff; }
.omni-share { margin: 0 37px 0 auto; }
.ext { margin-left: 28px; }
.panel { margin-left: 34px; }
.avatar { margin-left: 28px; }
.update {
  display: flex;
  align-items: center;
  width: 175px;
  height: 56px;
  margin-left: 15px;
  padding: 0 24px;
  justify-content: space-between;
  border: 2px solid #e8897c;
  border-radius: 28px;
  background: #352c30;
  color: #e8897c;
  font-size: 26px;
}

/* Weather page, scrolled so the heading starts above the viewport */
.page { position: relative; flex: 1; overflow: hidden; }
h1, h2, h3, p, hr, dl, dd, ul { margin: 0; padding: 0; }
h1, h2, h3 { text-align: center; }
h2, h3 { font-weight: 600; letter-spacing: -0.034em; }
h2 { font-size: 62px; line-height: 77px; }
h3 { font-size: 54.4px; line-height: 67px; }
hr { border: 0; height: 2px; background: #c8c9ca; }
.btn { display: block; margin: 0 auto; border: 0; color: #fff; font-family: inherit; font-size: 31px; line-height: 48px; white-space: nowrap; }
.jumbotron {
  display: flow-root;
  height: 454px;
  padding: 0 32px;
  background: #eaebef;
  border-radius: 0 0 9px 9px;
  text-align: center;
}
.jumbotron h1 { margin-top: -33px; font-size: 109px; line-height: 134px; font-weight: 300; letter-spacing: -0.045em; }
.lead { margin-top: 17px; font-size: 39px; line-height: 60px; font-weight: 300; letter-spacing: -0.022em; }
.jumbotron hr { margin: 46px 0 48px; background: #b9babd; }
.btn-new { width: 322px; height: 116px; padding: 2px 0 0; border-radius: 8px; background: #316cf4; font-size: 39px; letter-spacing: -0.034em; }

.columns { display: flex; letter-spacing: -0.009em; }
.sidebar { width: 720px; }
.search-title { margin-top: 9px; }
.field {
  height: 76px;
  margin: 95px 32px 0;
  padding: 13px 24px 11px;
  border: 2px solid #ced4da;
  border-radius: 10px;
  background: #e8effd;
  color: #000;
}
.btn-search {
  width: 155px;
  height: 76px;
  margin-top: 64px;
  padding: 2px 0 0;
  border: 2px solid #2455c3;
  border-radius: 10px;
  background: #285bcf;
  box-shadow: 0 0 0 8px #a3c0fb;
  letter-spacing: -0.018em;
}
.recent-title { margin-top: 17px; }
.recent { list-style: none; margin-top: 15px; border: 2px solid #dedfe0; }
.recent li { height: 82px; padding: 17px 32px 0; border-bottom: 2px solid #dedfe0; }
.recent li:last-child { height: 80px; border-bottom: 0; }

.weather { flex: 1; }
.city { padding-top: 1px; }
.weather h3 { margin: 16px 0 31px; }
.condition { display: block; margin: 32px auto 0; }
.readings { display: grid; grid-template-columns: 720px 1fr; grid-auto-rows: 112px; align-items: center; padding-left: 32px; }
.readings dt { padding-top: 2px; }
.readings dd { padding-top: 2px; }
.readings dd:last-child { padding-top: 0; }
.temp { letter-spacing: 0.018em; }
.uv { display: flex; align-items: center; justify-content: center; width: 52px; height: 70px; padding-top: 1px; background: #41875a; color: #fff; }
.forecast-title { margin: 33px 0 31px; letter-spacing: -0.028em; }
.cards { display: grid; grid-template-columns: repeat(3, 576px); gap: 16px; margin: 32px 0 0 208px; }
.card { height: 700px; border: 2px solid #cfcfcf; border-radius: 10px; background: #fff; box-shadow: 0 32px 96px rgba(0, 0, 0, .175); }

/* Shadow that the dock casts on the window */
.page-shade {
  position: absolute;
  left: 0;
  right: 0;
  bottom: 0;
  height: 80px;
  background: linear-gradient(180deg, transparent, rgba(0, 0, 0, .08));
  -webkit-mask-image: linear-gradient(90deg, transparent, #000 120px, #000 2700px, transparent);
  mask-image: linear-gradient(90deg, transparent, #000 120px, #000 2700px, transparent);
}

/* Dock */
.dock {
  flex: none;
  display: flex;
  align-items: center;
  gap: 20px;
  width: 2743px;
  height: 104px;
  margin: 10px 0 0 68px;
  padding-left: 14px;
  border: 2px solid #46464d;
  border-radius: 30px;
  background: linear-gradient(90deg, #433644 0, #443647 350px, #2c2833 620px, #1c1f28 900px, #191c25 100%);
}
.app { position: relative; flex: none; width: 66px; height: 66px; margin-top: -6px; }
.nudge { margin-left: -2px; }
.icon { display: block; width: 66px; height: 66px; overflow: visible; }
.icon-zoom { width: 72px; height: 72px; margin: -3px; }
.running::after { content: ""; position: absolute; left: 28px; top: 76px; width: 8px; height: 8px; border-radius: 50%; background: #a5a3ad; }
.divider { flex: none; width: 2px; height: 76px; margin: 0 7px 0 9px; background: #4d4f57; }
.cal-month { font-size: 13.500px; font-weight: 600; fill: #fff; }
.cal-day { font-size: 42px; font-weight: 300; fill: #222; letter-spacing: -2px; }
.tv-apple { color: #fff; }
.tv-text { font-size: 28px; font-weight: 500; fill: #fff; }
.doc, .mini, .trash { flex: none; }
.mini-a { margin: -4px 0 0 -6px; }
.mini-b { margin-left: -12px; }
.trash { margin: -10px 0 0 -3px; }
```
